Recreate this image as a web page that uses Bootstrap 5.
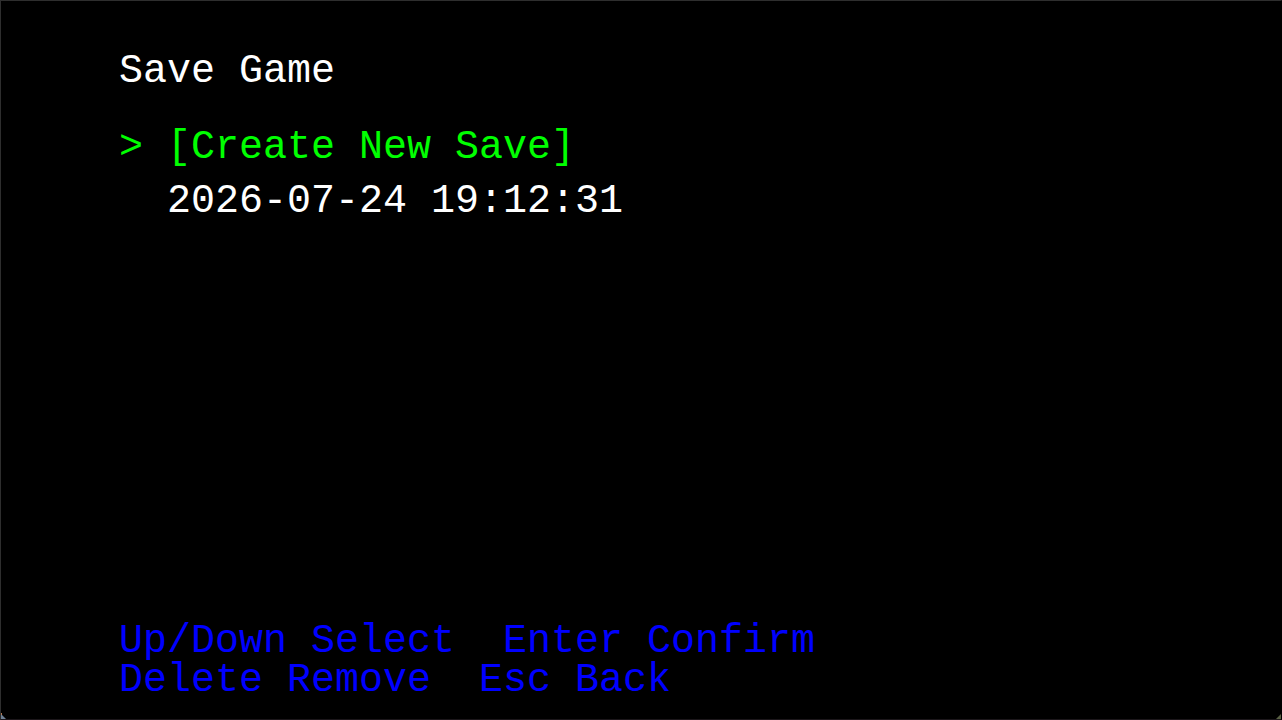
<!DOCTYPE html>
<html lang="en">
<head>
<meta charset="utf-8">
<meta name="viewport" content="width=device-width, initial-scale=1">
<title>Save Game</title>
<link href="https://cdn.jsdelivr.net/npm/bootstrap@5.3.0/dist/css/bootstrap.min.css" rel="stylesheet">
<style>
  body { background: #000; }
  .game-screen {
    background: #000;
    border: 1px solid #2e2e2e;
    border-right-color: #000;
    border-bottom-color: #1c171b;
    padding: 51px 24px 19px 118px;
    font: 40px/39px "Liberation Mono", monospace;
    color: #fff;
  }
  .screen-title { font: inherit; margin-bottom: 30px; }
  .save-slot { font: inherit; line-height: 54px; color: #fff; white-space: pre; }
  .save-slot.selected { color: #0f0; }
  .key-hints { color: #00f; white-space: pre-wrap; }
  .corner { width: 6px; height: 6px; }
</style>
</head>
<body>
<div class="game-screen min-vh-100 d-flex flex-column position-relative">
  <h1 class="screen-title">Save Game</h1>
  <main class="d-flex flex-column align-items-start">
    <button type="button" class="save-slot selected bg-transparent border-0 p-0" aria-current="true">&gt; [Create New Save]</button>
    <button type="button" class="save-slot bg-transparent border-0 p-0">  2026-07-24 19:12:31</button>
  </main>
  <footer class="key-hints mt-auto">Up/Down Select  Enter Confirm
Delete Remove  Esc Back</footer>
  <svg class="corner position-absolute bottom-0 start-0" viewBox="0 0 6 6" aria-hidden="true"><path d="M0 1L5 6H0z" fill="#6d7f94"/><path d="M0 0h1v2H0z" fill="#b07a55"/></svg>
  <svg class="corner position-absolute bottom-0 end-0" viewBox="0 0 6 6" aria-hidden="true"><path d="M6 1V6H1z" fill="#596044"/></svg>
</div>
<script src="https://cdn.jsdelivr.net/npm/bootstrap@5.3.0/dist/js/bootstrap.bundle.min.js"></script>
</body>
</html>
